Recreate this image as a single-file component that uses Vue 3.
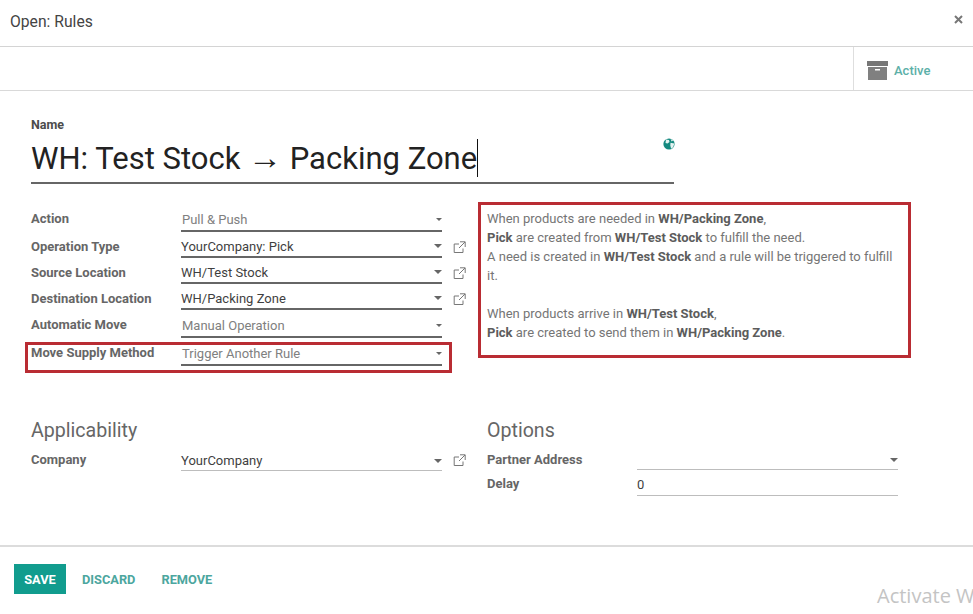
<script setup>
const rows = [
  { label: 'Action', value: 'Pull & Push', muted: true, link: false, h: 26, first: true },
  { label: 'Operation Type', value: 'YourCompany: Pick', muted: false, link: true, h: 26 },
  { label: 'Source Location', value: 'WH/Test Stock', muted: false, link: true, h: 26 },
  { label: 'Destination Location', value: 'WH/Packing Zone', muted: false, link: true, h: 26 },
  { label: 'Automatic Move', value: 'Manual Operation', muted: true, link: false, h: 28 },
  { label: 'Move Supply Method', value: 'Trigger Another Rule', muted: true, link: false, h: 28 },
]
</script>

<template>
  <div class="dialog">
    <header class="head">
      <span class="title">Open: Rules</span>
      <svg class="close" width="9" height="9" viewBox="0 0 9 9"><path d="M1 1l7 7M8 1l-7 7" stroke="#777" stroke-width="2" fill="none"/></svg>
    </header>

    <div class="statusbar">
      <div class="statbtn">
        <svg width="21" height="19" viewBox="0 0 21 19">
          <rect x="0" y="0" width="21" height="5" fill="#777"/>
          <rect x="1" y="6" width="19" height="13" fill="#808080"/>
          <rect x="8" y="8" width="5" height="1.5" fill="#fff"/>
        </svg>
        <span>Active</span>
      </div>
    </div>

    <main class="sheet">
      <div class="name-label">Name</div>
      <div class="name-row">
        <div class="name-input"><span class="name-text">WH: Test Stock <span class="arrow-char">→</span> Packing Zone</span><i class="caret"></i></div>
        <svg class="globe" width="12" height="12" viewBox="0 0 12 12">
          <circle cx="6" cy="6" r="5.6" fill="#14897f"/>
          <path d="M3 1.6l3 .4 .5 2-2 1.5-2-.6zM7.5 4.8l3.8.6-1.2 3.9-2 1.5-.8-3.3zM7.6 1l2.6 1.6-1.6.8z" fill="#e4f3f1"/>
        </svg>
      </div>

      <div class="top-group">
        <div class="fields">
          <div v-for="r in rows" :key="r.label" class="row" :class="{ first: r.first }" :style="{ height: r.h + 'px' }">
            <label class="lbl">{{ r.label }}</label>
            <div class="input strong" :class="{ muted: r.muted }">
              <span>{{ r.value }}</span>
              <i class="arrow" :class="{ small: r.muted }"></i>
            </div>
            <svg v-if="r.link" class="ext" width="13" height="13" viewBox="0 0 13 13">
              <path d="M10 7.5V11.5H1.2V3H6M7 .8h5.2V6M12 1L6 7" fill="none" stroke="#777" stroke-width="1"/>
            </svg>
          </div>
        </div>
        <div class="help">
          <div>When products are needed in <b>WH/Packing Zone</b>,</div>
          <div><b>Pick</b> are created from <b>WH/Test Stock</b> to fulfill the need.</div>
          <div>A need is created in <b>WH/Test Stock</b> and a rule will be triggered to fulfill it.</div>
          <div class="gap"><br></div>
          <div>When products arrive in <b>WH/Test Stock</b>,</div>
          <div><b>Pick</b> are created to send them in <b>WH/Packing Zone</b>.</div>
        </div>
      </div>

      <div class="bottom-group">
        <section class="col-left">
          <h2>Applicability</h2>
          <div class="row company">
            <label class="lbl">Company</label>
            <div class="input thin"><span>YourCompany</span><i class="arrow"></i></div>
            <svg class="ext" width="13" height="13" viewBox="0 0 13 13">
              <path d="M10 7.5V11.5H1.2V3H6M7 .8h5.2V6M12 1L6 7" fill="none" stroke="#777" stroke-width="1"/>
            </svg>
          </div>
        </section>
        <section class="col-right">
          <h2>Options</h2>
          <div class="row r2 partner">
            <label class="lbl">Partner Address</label>
            <div class="input thin"><span></span><i class="arrow"></i></div>
          </div>
          <div class="row r2 delay">
            <label class="lbl">Delay</label>
            <div class="input thin"><span>0</span></div>
          </div>
        </section>
      </div>
    </main>

    <footer class="foot">
      <button class="save">SAVE</button>
      <button class="link discard">DISCARD</button>
      <button class="link">REMOVE</button>
    </footer>

    <div class="mark mark-left"></div>
    <div class="mark mark-right"></div>
    <div class="watermark">Activate Windows<small>Go to Settings to activate Windows.</small></div>
  </div>
</template>

<style>
html, body { margin: 0; background: #fff; }
</style>

<style scoped>
.dialog {
  position: relative;
  width: 973px;
  height: 614px;
  overflow: hidden;
  background: #fff;
  font-family: Roboto, "Liberation Sans", sans-serif;
  font-size: 13px;
  color: #4c4c4c;
  display: flex;
  flex-direction: column;
}
.head {
  height: 46px;
  flex: none;
  box-sizing: content-box;
  border-bottom: 1px solid #d4d4d4;
  display: flex;
  align-items: center;
  justify-content: space-between;
  padding: 0 10px;
}
.title { font-size: 15.7px; color: #444; margin-top: -4px; }
.close { margin-top: -7px; }
.statusbar {
  height: 43px;
  flex: none;
  border-bottom: 1px solid #d9d9d9;
  display: flex;
  justify-content: flex-end;
}
.statbtn {
  width: 120px;
  border-left: 1px solid #dedede;
  display: flex;
  align-items: center;
  gap: 6px;
  padding: 4px 0 0 13px;
  box-sizing: border-box;
  color: #5cb0a8;
  font-weight: 500;
  font-size: 13px;
}
.sheet { flex: 1; padding: 27px 0 0 31px; min-height: 0; }
.name-label { font-size: 12.5px; font-weight: 700; color: #4c4c4c; line-height: 14px; }
.name-row { display: flex; align-items: flex-start; }
.name-input {
  width: 643px;
  height: 38px;
  padding: 7px 0 5px;
  border-bottom: 2px solid #666;
  display: flex;
  align-items: center;
  font-size: 31px;
  color: #222;
  line-height: 38px;
}
.name-text { white-space: pre; padding-top: 2px; }
.arrow-char { font-family: "Liberation Sans", sans-serif; font-size: 34px; line-height: 30px; }
.caret { width: 1px; height: 38px; background: #111; display: block; }
.globe { margin: 6px 0 0 -11px; }
.top-group { display: flex; margin-top: 22px; }
.fields { width: 447px; flex: none; }
.row { display: flex; align-items: flex-end; position: relative; }
.lbl {
  width: 150px;
  flex: none;
  font-size: 13px;
  font-weight: 700;
  color: #666;
  align-self: flex-start;
  line-height: 16px;
  padding-top: 7px;
}
.first .lbl { padding-top: 5px; }
.input {
  width: 261px;
  flex: none;
  box-sizing: border-box;
  display: flex;
  align-items: center;
  justify-content: space-between;
  height: 24px;
  color: #3f3f3f;
  font-size: 13px;
}
.input.strong { border-bottom: 2px solid #666; padding-top: 2px; }
.input.muted { color: #808080; padding-top: 0; }
.input.muted span { padding-left: 1px; }
.input.thin { border-bottom: 1px solid #bdbdbd; padding-top: 4px; }
.delay .input.thin { padding-top: 2px; }
.arrow {
  width: 0; height: 0;
  border-left: 4px solid transparent;
  border-right: 4px solid transparent;
  border-top: 4px solid #666;
}
.arrow.small {
  border-left-width: 3px;
  border-right-width: 3px;
  border-top-width: 3px;
}
.ext { position: absolute; left: 422px; top: 9px; }
.help {
  margin-left: 9px;
  width: 412px;
  margin-top: 3px;
  font-size: 13px;
  line-height: 19px;
  color: #757575;
}
.help b { font-weight: 700; color: #5c5c5c; }
.bottom-group { display: flex; margin-top: 51px; }
.col-left { width: 456px; flex: none; }
h2 {
  margin: 0;
  font-size: 19.6px;
  font-weight: 400;
  color: #666;
  line-height: 28px;
}
.company { height: 26px; }
.col-right { flex: none; }
.partner { height: 25px; }
.delay { height: 26px; }
.delay .lbl { padding-top: 6px; }
.delay .input, .partner .input { height: 24px; }
.foot {
  position: absolute;
  left: 0; right: 0; top: 545px; bottom: 0;
  border-top: 2px solid #dcdcdc;
  padding: 17px 14px 0;
  display: flex;
  align-items: flex-start;
}
button { font-family: inherit; border: 0; background: none; cursor: pointer; padding: 0; font-size: 12.8px; font-weight: 700; }
.save { width: 52px; height: 30px; background: #119c8e; color: #fff; }
.link { color: #4ca69e; height: 30px; }
.discard { margin-left: 16px; margin-right: 26px; }
.mark { position: absolute; border: 3px solid #b92c33; box-sizing: border-box; pointer-events: none; }
.mark-left { left: 25px; top: 342px; width: 427px; height: 31px; }
.mark-right { left: 478px; top: 202px; width: 433px; height: 156px; }
.watermark {
  position: absolute;
  left: 877px;
  top: 583px;
  white-space: nowrap;
  font-family: "Open Sans", sans-serif;
  font-size: 20px;
  line-height: 26px;
  color: #c4c4c4;
}
.watermark small { display: block; font-size: 13px; line-height: 18px; }
</style>
